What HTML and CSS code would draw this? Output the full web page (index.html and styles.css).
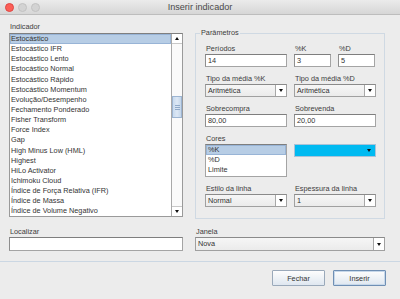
FILE: index.html
```html
<!DOCTYPE html>
<html lang="pt">
<head>
<meta charset="utf-8">
<title>Inserir indicador</title>
<link rel="stylesheet" href="styles.css">
</head>
<body>
<div class="window">
  <div class="titlebar">
    <div class="lights">
      <span class="light red"></span>
      <span class="light"></span>
      <span class="light"></span>
    </div>
    <div class="title">Inserir indicador</div>
    <div></div>
  </div>

  <div class="main">
    <div class="col-left">
      <div class="label">Indicador</div>
      <div class="listbox">
        <ul class="items">
          <li class="sel">Estocástico</li>
          <li>Estocástico IFR</li>
          <li>Estocástico Lento</li>
          <li>Estocástico Normal</li>
          <li>Estocástico Rápido</li>
          <li>Estocástico Momentum</li>
          <li>Evolução/Desempenho</li>
          <li>Fechamento Ponderado</li>
          <li>Fisher Transform</li>
          <li>Force Index</li>
          <li>Gap</li>
          <li>High Minus Low (HML)</li>
          <li>Highest</li>
          <li>HiLo Activator</li>
          <li>Ichimoku Cloud</li>
          <li>Índice de Força Relativa (IFR)</li>
          <li>Índice de Massa</li>
          <li>Índice de Volume Negativo</li>
        </ul>
        <div class="scrollbar">
          <div class="sbtn"><span class="tri up"></span></div>
          <div class="track"><div class="thumb"><i></i><i></i><i></i></div></div>
          <div class="sbtn"><span class="tri"></span></div>
        </div>
      </div>
    </div>

    <fieldset class="params">
      <legend>Parâmetros</legend>
      <div class="pgrid">
        <div class="field">
          <div class="label">Períodos</div>
          <div class="input">14</div>
        </div>
        <div class="pair">
          <div class="field">
            <div class="label">%K</div>
            <div class="input">3</div>
          </div>
          <div class="field">
            <div class="label">%D</div>
            <div class="input">5</div>
          </div>
        </div>

        <div class="field">
          <div class="label">Tipo da média %K</div>
          <div class="combo"><span class="cval">Aritmética</span><span class="cbtn"><span class="tri"></span></span></div>
        </div>
        <div class="field">
          <div class="label">Tipo da média %D</div>
          <div class="combo"><span class="cval">Aritmética</span><span class="cbtn"><span class="tri"></span></span></div>
        </div>

        <div class="field">
          <div class="label">Sobrecompra</div>
          <div class="input">80,00</div>
        </div>
        <div class="field">
          <div class="label">Sobrevenda</div>
          <div class="input">20,00</div>
        </div>

        <div class="field">
          <div class="label">Cores</div>
          <ul class="colors">
            <li class="sel">%K</li>
            <li>%D</li>
            <li>Limite</li>
          </ul>
        </div>
        <div class="field">
          <div class="label"></div>
          <div class="colorpick"><span class="tri"></span></div>
        </div>

        <div class="field">
          <div class="label">Estilo da linha</div>
          <div class="combo"><span class="cval">Normal</span><span class="cbtn"><span class="tri"></span></span></div>
        </div>
        <div class="field">
          <div class="label">Espessura da linha</div>
          <div class="combo"><span class="cval">1</span><span class="cbtn"><span class="tri"></span></span></div>
        </div>
      </div>
    </fieldset>

    <div class="field">
      <div class="label">Localizar</div>
      <div class="input tall"></div>
    </div>
    <div class="field">
      <div class="label">Janela</div>
      <div class="combo tall"><span class="cval">Nova</span><span class="cbtn"><span class="tri"></span></span></div>
    </div>
  </div>

  <div class="footer">
    <button class="btn">Fechar</button>
    <button class="btn default">Inserir</button>
  </div>
</div>
</body>
</html>
```

FILE: styles.css
```css
* { box-sizing: border-box; }

html, body {
  margin: 0;
  padding: 0;
}

body {
  width: 400px;
  height: 299px;
  overflow: hidden;
  background: #ececec;
  font-family: "Liberation Sans", Arial, sans-serif;
  font-size: 7.3px;
  color: #333;
}

.window {
  width: 400px;
  height: 299px;
}

/* Title bar */
.titlebar {
  height: 15px;
  display: grid;
  grid-template-columns: 1fr auto 1fr;
  align-items: center;
  background: linear-gradient(#ebebeb, #d6d6d6);
  border-bottom: 1px solid #bdbdbd;
}

.lights {
  display: flex;
  gap: 4px;
  padding-left: 5px;
  align-items: center;
}

.light {
  width: 9px;
  height: 9px;
  border-radius: 50%;
  background: #d3d3d3;
  border: 1px solid #c2c2c2;
}

.light.red {
  background: #fc5f57;
  border-color: #df4744;
}

.title {
  font-size: 9.1px;
  color: #4a4a4a;
  line-height: 14px;
}

/* Main layout */
.main {
  display: grid;
  grid-template-columns: 174px 190px;
  column-gap: 12px;
  row-gap: 8px;
  padding: 7px 0 0 9px;
}

.label {
  height: 10px;
  line-height: 10px;
  color: #3c3c3c;
  padding-left: 1px;
  white-space: nowrap;
}

.col-left .label {
  height: 11px;
}

/* List box */
.listbox {
  height: 184px;
  display: flex;
  background: #fff;
  border: 1px solid #9a9a9a;
  border-top-color: #7f7f7f;
}

.items {
  list-style: none;
  margin: 0;
  padding: 0;
  flex: 1;
}

.items li {
  height: 10.15px;
  line-height: 10px;
  padding-left: 1px;
  white-space: nowrap;
  color: #333;
}

.items li.sel,
.colors li.sel {
  background: #b7cde5;
  box-shadow: inset 0 0 0 1px #98b4d6;
}

.scrollbar {
  width: 11px;
  display: flex;
  flex-direction: column;
  border-left: 1px solid #a9a9a9;
  background: #fafafa;
}

.sbtn {
  height: 10px;
  display: flex;
  align-items: center;
  justify-content: center;
  background: #fff;
}

.sbtn:first-child {
  border-bottom: 1px solid #c8c8c8;
}

.sbtn:last-child {
  border-top: 1px solid #c8c8c8;
}

.track {
  flex: 1;
  padding-top: 52px;
}

.thumb {
  height: 22px;
  background: linear-gradient(90deg, #c8daee, #dde8f5 50%, #c4d6ea);
  border: 1px solid #9db5d2;
  display: flex;
  flex-direction: column;
  justify-content: center;
  align-items: center;
  gap: 1px;
}

.thumb i {
  display: block;
  width: 5px;
  height: 1px;
  background: #8fa9c8;
}

.tri {
  width: 0;
  height: 0;
  border-left: 2.5px solid transparent;
  border-right: 2.5px solid transparent;
  border-top: 3px solid #111;
}

.tri.up {
  border-top: 0;
  border-bottom: 3px solid #111;
}

/* Parameters fieldset */
.params {
  margin: 6px 0 0 0;
  padding: 6px 0 11px 9px;
  border: 1px solid #cfd9e3;
  min-width: 0;
}

.params legend {
  font-size: 7.3px;
  line-height: 10px;
  padding: 0 1px;
  margin-left: -5px;
  color: #3c3c3c;
}

.pgrid {
  display: grid;
  grid-template-columns: 82px 82px;
  column-gap: 7px;
  row-gap: 7px;
}

.pair {
  display: grid;
  grid-template-columns: 37px 37px;
  column-gap: 7px;
}

.input {
  height: 13px;
  line-height: 11px;
  background: #fff;
  border: 1px solid #a4a4a4;
  border-top-color: #7e7e7e;
  border-left-color: #8e8e8e;
  padding-left: 2px;
  color: #333;
}

.combo {
  height: 13px;
  display: flex;
  background: #f1f1f1;
  border: 1px solid #a0a0a0;
  border-top-color: #8a8a8a;
}

.cval {
  flex: 1;
  line-height: 11px;
  padding-left: 2px;
  color: #333;
  background: linear-gradient(#f6f6f6, #ebebeb);
}

.cbtn {
  width: 11px;
  display: flex;
  align-items: center;
  justify-content: center;
  background: #fff;
  border-left: 1px solid #a8a8a8;
}

.tall {
  height: 14px;
}

.colors {
  list-style: none;
  margin: 0;
  padding: 0;
  height: 33px;
  background: #fff;
  border: 1px solid #a4a4a4;
  border-top-color: #7e7e7e;
}

.colors li {
  height: 10px;
  line-height: 10px;
  padding-left: 2px;
}

.colorpick {
  height: 13px;
  background: #00baf1;
  border: 1px solid #a9c3d8;
  display: flex;
  align-items: center;
  justify-content: flex-end;
  padding-right: 4px;
}

/* Footer */
.footer {
  margin-top: 10px;
  border-top: 1px solid #cbd7e3;
  padding: 8px 14px 0 0;
  display: flex;
  justify-content: flex-end;
  gap: 8px;
}

.btn {
  width: 53px;
  height: 16px;
  padding: 0;
  font-family: "Liberation Sans", Arial, sans-serif;
  font-size: 7.3px;
  color: #333;
  background: linear-gradient(#fdfdfd, #dfe7f0);
  border: 1px solid #9aa9ba;
  border-radius: 1px;
}

.btn.default {
  border-color: #6f8fb4;
  box-shadow: inset 0 0 0 1px #c7d8ea;
}
```
